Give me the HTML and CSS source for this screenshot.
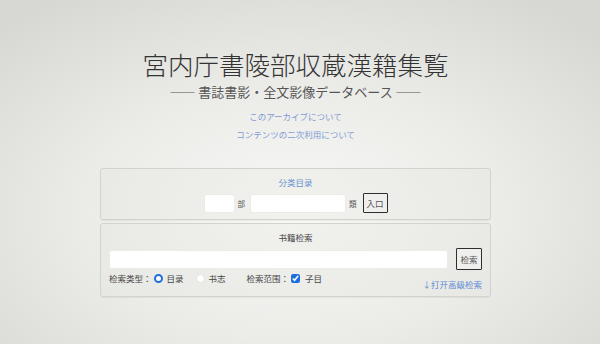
FILE: index.html
```html
<!DOCTYPE html>
<html lang="ja">
<head>
    <meta charset="UTF-8">
    <title>宮内庁書陵部収蔵漢籍集覧</title>
    <link rel="stylesheet" href="styles.css">
</head>
<body class="page">
<div class="root">
    <header class="masthead">
        <h1 class="title">宮内庁書陵部収蔵漢籍集覧</h1>
        <p class="subtitle">—— 書誌書影・全文影像データベース ——</p>
        <nav class="links">
            <a href="#" class="link">このアーカイブについて</a>
            <a href="#" class="link">コンテンツの二次利用について</a>
        </nav>
    </header>

    <section class="panel">
        <div class="panel-title panel-title-blue">分类目录</div>
        <div class="category-row">
            <input type="text" class="field field-bu">
            <span class="unit">部</span>
            <input type="text" class="field field-rui">
            <span class="unit">類</span>
            <button class="btn">入口</button>
        </div>
    </section>

    <section class="panel">
        <div class="panel-title">书籍检索</div>
        <div class="search-row">
            <input type="text" class="field field-search">
            <button class="btn btn-search">检索</button>
        </div>
        <div class="option-row">
            <div class="options">
                <span class="opt-label">检索类型：</span>
                <label class="opt"><input type="radio" class="radio" name="type" checked><span>目录</span></label>
                <label class="opt"><input type="radio" class="radio" name="type"><span>书志</span></label>
                <span class="opt-label opt-gap">检索范围：</span>
                <label class="opt"><input type="checkbox" class="check" checked><span>子目</span></label>
            </div>
            <a href="#" class="advanced">↓打开高级检索</a>
        </div>
    </section>
</div>
</body>
</html>
```

FILE: styles.css
```css
html, body {
    margin: 0;
    height: 100%;
}

.page {
    font-family: "Noto Sans CJK JP", "Noto Sans CJK SC", sans-serif;
    color: #444;
    background: radial-gradient(ellipse 70% 75% at 49% 62%, #f8f8f6 0%, #ebebe8 50%, #d7d8d3 100%);
    overflow: hidden;
}

.root {
    width: 391px;
    margin: 0 auto;
    padding: 49px 9px 0 0;
}

.masthead {
    text-align: center;
}

.title {
    margin: 0;
    font-size: 25.5px;
    line-height: 30px;
    font-weight: 300;
    color: #333;
    white-space: nowrap;
}

.subtitle {
    margin: 5px 0 0 0;
    font-size: 13px;
    line-height: 16px;
    color: #555;
    white-space: nowrap;
}

.links {
    margin-top: 10px;
}

.link {
    display: block;
    font-size: 8.5px;
    line-height: 12px;
    margin-bottom: 6px;
    color: #7f9bd4;
    text-decoration: none;
}

.panel {
    border: 1px solid #d3d3ce;
    border-radius: 3px;
    background: rgba(228, 228, 223, 0.35);
    box-shadow: 0 1px 1px rgba(0, 0, 0, 0.05);
    padding: 7px 8px 6px 8px;
    margin-top: 3px;
}

.masthead + .panel {
    margin-top: 28px;
}

.panel-title {
    text-align: center;
    font-size: 8.5px;
    line-height: 12px;
    color: #444;
}

.panel-title-blue {
    color: #6b93cf;
}

.category-row {
    display: flex;
    justify-content: center;
    align-items: center;
    margin-top: 5px;
    height: 20px;
}

.field {
    border: 1px solid #ebebe8;
    border-radius: 3px;
    background: #fff;
    height: 19px;
    box-sizing: border-box;
    padding: 0 3px;
    outline: none;
}

.field-bu {
    width: 31px;
}

.field-rui {
    width: 96px;
}

.unit {
    font-size: 7.5px;
    color: #555;
    margin: 0 5px 0 3px;
}

.btn {
    font-family: inherit;
    font-size: 8.5px;
    color: #555;
    background: #efefed;
    border: 1px solid #2e2e2e;
    border-radius: 1px;
    height: 20px;
    width: 25px;
    padding: 0;
    margin-left: 1px;
}

.search-row {
    display: flex;
    align-items: center;
    margin-top: 5px;
}

.field-search {
    flex: auto;
}

.btn-search {
    width: 26px;
    height: 22px;
    margin-left: 8px;
}

.option-row {
    display: flex;
    justify-content: space-between;
    height: 18px;
    margin-top: 2px;
}

.options {
    display: flex;
    align-items: center;
    height: 12px;
    font-size: 8.5px;
    color: #444;
}

.opt-label {
    white-space: nowrap;
}

.opt-gap {
    margin-left: 11px;
}

.opt {
    display: flex;
    align-items: center;
    margin-right: 10px;
}

.radio {
    appearance: none;
    width: 9px;
    height: 9px;
    margin: 0 4px 0 2px;
    border-radius: 50%;
    border: 1px solid #e2e2e0;
    background: #fff;
    box-sizing: border-box;
}

.radio:checked {
    border: 2.5px solid #1d6fe0;
}

.check {
    width: 9px;
    height: 9px;
    margin: 0 5px 0 2px;
    accent-color: #1d6fe0;
}

.advanced {
    align-self: flex-end;
    font-size: 8.5px;
    line-height: 12px;
    color: #5d8ad3;
    text-decoration: none;
    white-space: nowrap;
}
```
